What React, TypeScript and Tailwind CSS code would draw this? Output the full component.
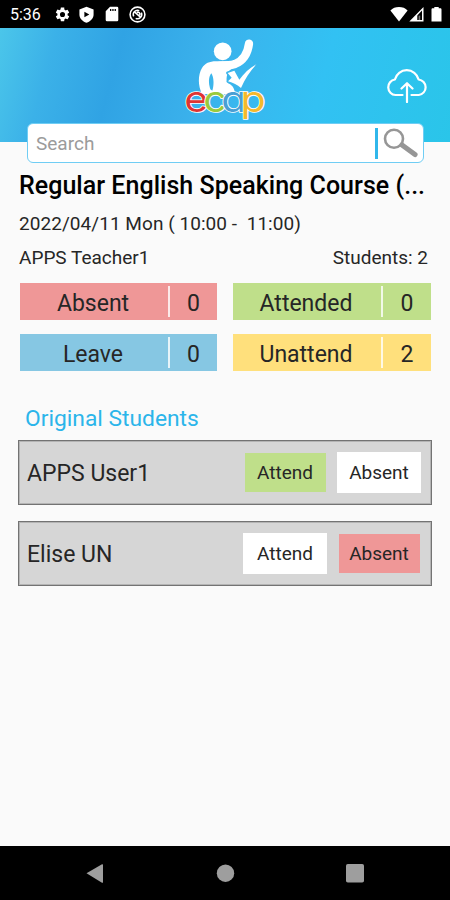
import React from "react";

const stats = [
  { label: "Absent", count: 0, color: "bg-[#ef9797]" },
  { label: "Attended", count: 0, color: "bg-[#bfdf8a]" },
  { label: "Leave", count: 0, color: "bg-[#86c7e3]" },
  { label: "Unattend", count: 2, color: "bg-[#ffe07c]" },
];

const students = [
  { name: "APPS User1", status: "attend" },
  { name: "Elise UN", status: "absent" },
];

function StatusBar() {
  return (
    <div className="flex h-7 items-center bg-black pl-[10px] pr-2 text-white">
      <span className="w-[44px] pt-[2px] text-[16px] leading-none">5:36</span>
      <svg className="h-[17px] w-[17px]" viewBox="0 0 24 24" fill="currentColor">
        <path
          fillRule="evenodd"
          d="M19.14 12.94c.04-.3.06-.61.06-.94s-.02-.64-.07-.94l2.03-1.58a.49.49 0 0 0 .12-.61l-1.92-3.32a.49.49 0 0 0-.59-.22l-2.39.96a7 7 0 0 0-1.62-.94l-.36-2.54A.48.48 0 0 0 13.92 2h-3.84c-.24 0-.43.17-.47.41l-.36 2.54c-.59.24-1.13.57-1.62.94l-2.39-.96a.48.48 0 0 0-.59.22L2.74 8.87a.48.48 0 0 0 .12.61l2.03 1.58a7.3 7.3 0 0 0 0 1.88l-2.03 1.58a.49.49 0 0 0-.12.61l1.92 3.32c.12.22.37.29.59.22l2.39-.96c.5.38 1.03.7 1.62.94l.36 2.54c.05.24.24.41.48.41h3.84c.24 0 .44-.17.47-.41l.36-2.54a7 7 0 0 0 1.62-.94l2.39.96c.22.08.47 0 .59-.22l1.92-3.32a.48.48 0 0 0-.12-.61zM12 15.6a3.6 3.6 0 1 1 0-7.2 3.6 3.6 0 0 1 0 7.2z"
        />
      </svg>
      <svg className="ml-[7px] h-[17px] w-[17px]" viewBox="0 0 24 24" fill="currentColor">
        <path fillRule="evenodd" d="M12 1 2 5v7c0 5.5 4.2 9.9 10 11.5 5.8-1.6 10-6 10-11.5V5zM9 8l7 4-7 4z" />
      </svg>
      <svg className="ml-[10px] h-[16px] w-[14px]" viewBox="0 0 14 16" fill="currentColor">
        <path
          fillRule="evenodd"
          d="M5 .8h7a1.3 1.3 0 0 1 1.3 1.3v11.8a1.3 1.3 0 0 1-1.3 1.3H2A1.3 1.3 0 0 1 .7 13.9V5.2zM5 3v2h1.3V3zm2.3 0v2h1.3V3zm2.3 0v2h1.3V3z"
        />
      </svg>
      <svg className="ml-[10px] h-[17px] w-[17px]" viewBox="0 0 17 17" fill="none" stroke="currentColor">
        <circle cx="8.5" cy="8.5" r="7.4" strokeWidth="1.6" />
        <path d="M4.7 10.4a4.3 4.3 0 0 1 5.6-5.8M12.3 6.6a4.3 4.3 0 0 1-5.6 5.8" strokeWidth="1.5" />
        <path d="m5.3 5.7 6.4 5.6M7.8 6.3a2.3 2.3 0 0 1 3 3" strokeWidth="1.6" />
      </svg>
      <div className="flex-1" />
      <svg className="h-[16px] w-[18px]" viewBox="0 0 18 16" fill="currentColor">
        <path d="M9 15.4.4 4.4C2.6 2.2 5.6 1 9 1s6.4 1.2 8.6 3.4z" />
      </svg>
      <svg className="ml-[1px] h-[16px] w-[15px]" viewBox="0 0 15 16" fill="currentColor">
        <path fillRule="evenodd" d="M14.5 1v14.5H.3zM13 4.6 8.3 9.4V14H13z" />
        <path d="M9.6 9.6h1.6V14H9.6z" fill="#777" />
      </svg>
      <svg className="ml-[7px] h-[16px] w-[11px]" viewBox="0 0 11 16" fill="currentColor">
        <path d="M3.3 1h4.4v1.3h1.6c.7 0 1.2.5 1.2 1.2v12H.5v-12c0-.7.5-1.2 1.2-1.2h1.6z" />
      </svg>
    </div>
  );
}

function Logo() {
  return (
    <svg className="mx-auto h-[97px] w-[110px]" viewBox="0 0 330 291">
      <circle cx="158" cy="64" r="26.5" fill="#fff" />
      {/* raised arm */}
      <path
        d="M237 41c-4 31-18 51-42 61-12 4-26 5-45 5"
        fill="none"
        stroke="#fff"
        strokeWidth="25"
        strokeLinecap="round"
      />
      {/* torso and lowered arm */}
      <path
        d="M96 192C84 168 83 135 96 114c9-14 22-20 42-20h44l14 18c-12 4-20 10-24 20-3 12-4 20 2 28 10 4 20 12 21 32z"
        fill="#fff"
      />
      <path d="M121 178c-6-18-6-36 3-48 7 10 9 34 3 52z" fill="#3cb6ec" />
      <path
        d="m173 129 20-7 15 27c14-19 31-35 51-46-19 21-34 43-46 71-11-9-23-16-39-20l11-11z"
        fill="#fff"
        stroke="#3cb6ec"
        strokeWidth="9"
        strokeLinejoin="round"
        className="[paint-order:stroke]"
      />
      <text
        transform="translate(43 247) scale(1.14 1)"
        fontSize="108"
        stroke="#fff"
        strokeWidth="5"
        strokeLinejoin="round"
        className="font-[Inter,sans-serif] font-normal [font-feature-settings:'cv11'] [paint-order:stroke]"
      >
        <tspan x="0" fill="#df3434">e</tspan>
        <tspan x="50" fill="#9bca3c">c</tspan>
        <tspan x="97" fill="#4a9fd4">a</tspan>
        <tspan x="148" fill="#f4b92c">p</tspan>
      </text>
    </svg>
  );
}

function Header() {
  return (
    <header className="relative h-[114px] bg-[linear-gradient(105deg,#4bc6ea_0%,#3bb1e8_12%,#30a3e4_26%,#3bb2ec_46%,#32c1f3_70%,#2ac5e9_100%)] pt-[2px]">
      <Logo />
      <svg
        className="absolute right-[22px] top-[38px] h-[37px] w-[42px]"
        viewBox="0 0 42 37"
        fill="none"
        stroke="#fff"
        strokeWidth="2.2"
        strokeLinecap="round"
        strokeLinejoin="round"
      >
        <path d="M16.5 29H9.5a7.8 7.8 0 0 1-.6-15.5A12.2 12.2 0 0 1 32.6 13.5a7.8 7.8 0 0 1 .2 15.5h-7.3" />
        <path d="M21 36V17.5M15.5 22.5l5.5-5.3 5.5 5.3" />
      </svg>
      <div className="absolute left-[27px] top-[95px] flex h-[40px] w-[397px] items-center rounded-[6px] border border-[#6fcdf4] bg-white pl-[8px] pr-[3px]">
        <span className="flex-1 pt-[2px] text-[19px] leading-[28px] text-[#9b9b9b]">Search</span>
        <div className="h-[31px] w-[3px] bg-[#31b7eb]" />
        <svg className="ml-[4px] h-[32px] w-[38px]" viewBox="0 0 38 32" fill="none">
          <path d="m20 18 13 9.5" stroke="#969696" strokeWidth="5.2" strokeLinecap="round" />
          <circle cx="12" cy="11.8" r="9" stroke="#969696" strokeWidth="2.6" />
        </svg>
      </div>
    </header>
  );
}

function StudentRow({ name, status }: { name: string; status: string }) {
  return (
    <div className="flex h-[65px] items-center border border-[#737373] bg-[#d6d6d6] pl-[8px] shadow-[inset_0_0_0_1px_#b4b4b4]">
      <span className="flex-1 pt-[4px] text-[23px]">{name}</span>
      <div className="flex w-[84px] justify-center text-[19px]">
        <span
          className={
            status === "attend"
              ? "flex h-[39px] w-[81px] items-center justify-center bg-[#bfdf8a] pt-[2px]"
              : "flex h-[41px] w-[84px] items-center justify-center bg-white pt-[2px]"
          }
        >
          Attend
        </span>
      </div>
      <div className="ml-[10px] mr-[10px] flex w-[84px] justify-center text-[19px]">
        <span
          className={
            status === "absent"
              ? "flex h-[39px] w-[81px] items-center justify-center bg-[#ef9797] pt-[2px]"
              : "flex h-[41px] w-[84px] items-center justify-center bg-white pt-[2px]"
          }
        >
          Absent
        </span>
      </div>
    </div>
  );
}

export default function App() {
  return (
    <div className="flex h-[900px] w-[450px] flex-col overflow-hidden bg-[#fafafa] font-[Roboto,sans-serif] text-[#262626]">
      <StatusBar />
      <Header />

      <main className="flex-1 pl-[18px] pr-[18px] pt-[29px]">
        <h1 className="whitespace-nowrap pl-px text-[25px] font-medium leading-[30px] tracking-[0.03px] text-black">
          Regular English Speaking Course (...
        </h1>
        <p className="mt-[9px] whitespace-pre pl-px text-[19px] leading-[28px] tracking-[0.05px]">
          2022/04/11 Mon ( 10:00 -  11:00)
        </p>
        <div className="mt-[6px] flex justify-between pl-px pr-[4px] text-[19px] leading-[28px]">
          <span>APPS Teacher1</span>
          <span>Students: 2</span>
        </div>

        {/* Attendance totals */}
        <div className="mt-[11px] grid grid-cols-[197px_198px] gap-x-[16px] gap-y-[14px] pl-[2px]">
          {stats.map((s) => (
            <div key={s.label} className={`flex h-[37px] items-center text-[23px] ${s.color}`}>
              <span className="w-[148px] pt-[5px] pr-[2px] text-center">{s.label}</span>
              <div className="h-[31px] w-[2px] bg-white/80" />
              <span className="flex-1 pt-[5px] text-center">{s.count}</span>
            </div>
          ))}
        </div>

        <h2 className="mt-[34px] pl-[7px] text-[22.8px] leading-[28px] text-[#2bb5ea]">Original Students</h2>
        <div className="mt-[7px] flex flex-col gap-4">
          {students.map((s) => (
            <StudentRow key={s.name} name={s.name} status={s.status} />
          ))}
        </div>
      </main>

      <nav className="h-[54px] bg-black">
        <svg className="h-[54px] w-full" viewBox="0 0 450 54" fill="#9e9e9e">
          <path d="M86.5 27.3 102 18.3q1-.5 1 .7v17q0 1.2-1 .7z" />
          <circle cx="225.5" cy="27.2" r="8.7" />
          <rect x="346" y="18" width="18" height="18.5" rx="1.8" />
        </svg>
      </nav>
    </div>
  );
}
